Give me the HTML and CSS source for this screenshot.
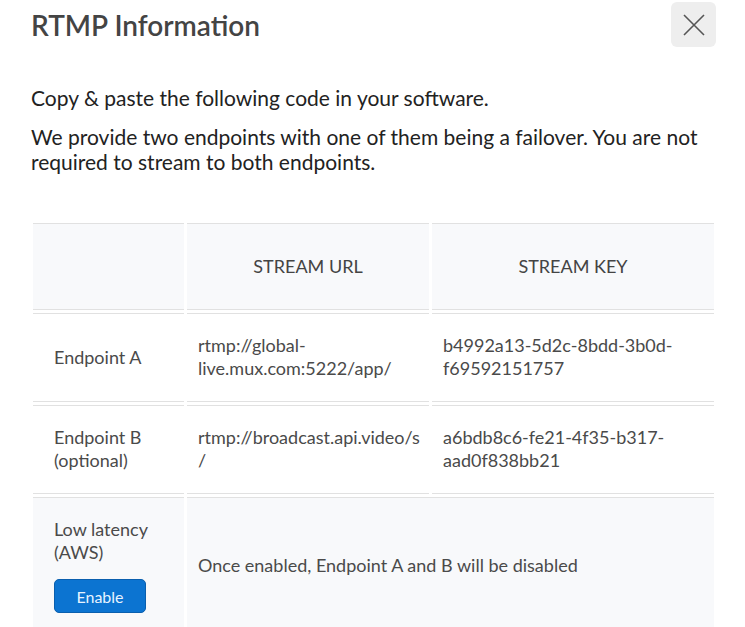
FILE: index.html
```html
<!DOCTYPE html>
<html lang="en">
<head>
    <meta charset="UTF-8">
    <meta name="viewport" content="width=device-width, initial-scale=1.0">
    <title>RTMP Information</title>
    <link rel="stylesheet" href="styles.css">
</head>
<body>
    <div class="modal">
        <div class="modalHead">
            <h1>RTMP Information</h1>
            <button class="close" aria-label="Close">
                <svg width="22" height="22" viewBox="0 0 22 22">
                    <path d="M1 1 L21 21 M21 1 L1 21" stroke="#555" stroke-width="1.6" fill="none"/>
                </svg>
            </button>
        </div>

        <div class="intro">
            <p>Copy &amp; paste the following code in your software.</p>
            <p>We provide two endpoints with one of them being a failover. You are not required to stream to both endpoints.</p>
        </div>

        <!-- endpoints table -->
        <table class="endpoints">
            <colgroup>
                <col class="colName">
                <col class="colUrl">
                <col class="colKey">
            </colgroup>
            <thead>
                <tr>
                    <th></th>
                    <th>Stream URL</th>
                    <th>Stream Key</th>
                </tr>
            </thead>
            <tbody>
                <tr>
                    <td>Endpoint A</td>
                    <td class="url">rtmp://global-live.mux.com:5222/app/</td>
                    <td>b4992a13-5d2c-8bdd-3b0d-f69592151757</td>
                </tr>
                <tr>
                    <td>Endpoint B (optional)</td>
                    <td class="url">rtmp://broadcast.api.video/&#8288;s&#8288;/</td>
                    <td>a6bdb8c6-fe21-4f35-b317-aad0f838bb21</td>
                </tr>
                <tr class="lowLatency">
                    <td class="top">
                        Low latency (AWS)
                        <button class="enable">Enable</button>
                    </td>
                    <td colspan="2">Once enabled, Endpoint A and B will be disabled</td>
                </tr>
            </tbody>
        </table>
    </div>
</body>
</html>
```

FILE: styles.css
```css
* {
    box-sizing: border-box;
}

body {
    margin: 0;
    background: #fff;
    font-family: 'Lato', 'Open Sans', sans-serif;
}

.modal {
    padding: 2px 28px 0 30px;
}

.modalHead {
    display: flex;
    justify-content: space-between;
    align-items: center;
    height: 45px;
}

.modalHead h1 {
    margin: 0 0 0 1px;
    font-size: 28px;
    font-weight: 600;
    color: #444;
}

.close {
    width: 45px;
    height: 45px;
    margin-right: 1px;
    border: none;
    border-radius: 6px;
    background: #eee;
    display: flex;
    justify-content: center;
    align-items: center;
    padding: 0;
    cursor: pointer;
}

.intro {
    margin-top: 38px;
    padding-left: 1px;
}

.intro p {
    margin: 0 0 14px;
    font-size: 21px;
    line-height: 25px;
    color: #222;
}

.intro p:last-child {
    margin-bottom: 0;
}

.endpoints {
    width: 100%;
    margin-top: 46px;
    border-collapse: separate;
    border-spacing: 3px;
    table-layout: fixed;
}

.colName { width: 151px; }
.colUrl { width: 242px; }
.colKey { width: 282px; }

.endpoints th,
.endpoints td {
    border-top: 1px solid #e1e1e1;
    border-bottom: 1px solid #e1e1e1;
    padding: 20px 11px 21px;
    font-size: 18px;
    line-height: 23px;
    color: #4a4a4a;
    text-align: left;
    vertical-align: middle;
    overflow-wrap: anywhere;
}

.endpoints td.url {
    padding-right: 7px;
}

.endpoints th {
    padding: 31px 11px;
    background: #f8f9fb;
    font-weight: 400;
    text-transform: uppercase;
    text-align: center;
    color: #444;
}

.endpoints td:first-child {
    padding-left: 21px;
}

.lowLatency td {
    background: #f8f9fb;
}

.lowLatency td.top {
    vertical-align: top;
    padding-top: 20px;
}

.enable {
    display: block;
    width: 92px;
    height: 34px;
    margin-top: 15px;
    border: 1px solid #0a5fae;
    border-radius: 5px;
    background: #0c74d1;
    color: #e8f3ff;
    font-family: 'Lato', sans-serif;
    font-size: 16px;
    cursor: pointer;
}
```
